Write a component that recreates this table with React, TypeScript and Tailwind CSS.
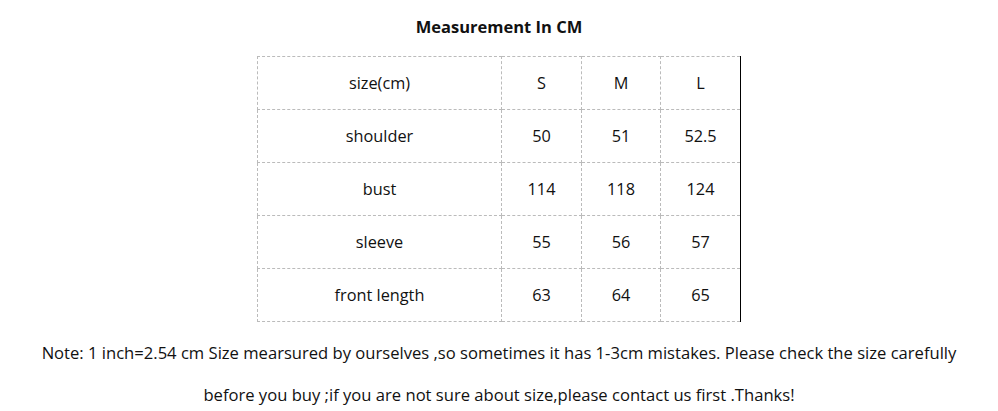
import React from "react";

const rows = [
  ["size(cm)", "S", "M", "L"],
  ["shoulder", "50", "51", "52.5"],
  ["bust", "114", "118", "124"],
  ["sleeve", "55", "56", "57"],
  ["front length", "63", "64", "65"],
];

export default function App() {
  return (
    <div className="w-[998px] h-[411px] overflow-hidden bg-white text-[#111] flex flex-col items-center" style={{ fontFamily: '"Open Sans", "Noto Sans", sans-serif' }}>
      <div className="shrink-0 h-[56px] flex items-center justify-center font-bold text-[16.5px] pb-[2px]">Measurement In CM</div>
      <table className="shrink-0 border-collapse table-fixed w-[483px] text-[16.3px] border-r-[1.5px] border-r-black">
        <colgroup>
          <col className="w-[244px]" />
          <col className="w-[80px]" />
          <col className="w-[79px]" />
          <col className="w-[80px]" />
        </colgroup>
        <tbody>
          {rows.map((r, i) => (
            <tr key={i} className="h-[53px]">
              {r.map((c, j) => (
                <td
                  key={j}
                  className={`border border-dashed border-[#bbb] text-center p-0 ${j === 3 ? "border-r-solid border-r-black" : ""}`}
                >
                  {c}
                </td>
              ))}
            </tr>
          ))}
        </tbody>
      </table>
      <div className="shrink-0 text-[16.6px] text-center leading-[42px] mt-[10px] w-[998px] whitespace-nowrap">
        <div>Note: 1 inch=2.54 cm Size mearsured by ourselves ,so sometimes it has 1-3cm mistakes. Please check the size carefully</div>
        <div>before you buy ;if you are not sure about size,please contact us first .Thanks!</div>
      </div>
    </div>
  );
}
